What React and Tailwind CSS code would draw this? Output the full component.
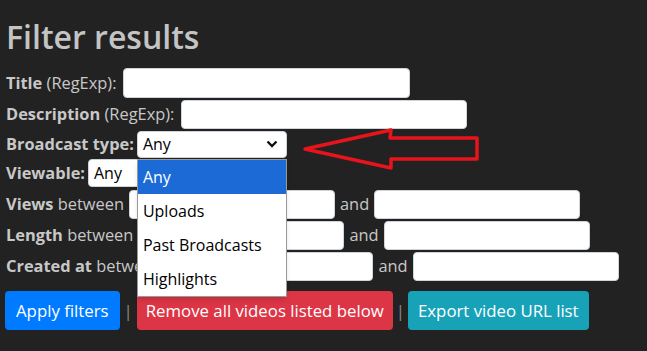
import React from 'react';

const font = { fontFamily: '"Open Sans", "Noto Sans", sans-serif' };

const Field = ({ w, h = 'h-[29px]' }) => (
    <input type="text" className={`${w} ${h} bg-white rounded-[4px] border border-[#ced4da] outline-none`} />
);

const RangeRow = ({ label, h, gap = 'mx-[6px]' }) => (
    <div className={`flex items-center ${h}`}>
        <span className="mr-[5px]"><b>{label}</b> between</span>
        <Field w="w-[206px]" />
        <span className={gap}>and</span>
        <Field w="w-[206px]" />
    </div>
);

export default function App() {
    return (
        <div className="w-[647px] h-[351px] bg-[#222222] text-[#c8c8c8] text-[16.4px] px-[6px] pt-[17px] relative overflow-hidden" style={font}>
            <h2 className="text-[32px] font-semibold leading-[40px] mb-[10px] text-[#c4c4c4]">Filter results</h2>

            <div className="flex items-center h-[32px]">
                <span className="mr-[7px]"><b>Title</b> (RegExp):</span>
                <Field w="w-[287px]" h="h-[30px]" />
            </div>
            <div className="flex items-center h-[31px]">
                <span className="mr-[7px]"><b>Description</b> (RegExp):</span>
                <Field w="w-[286px]" />
            </div>
            <div className="flex items-center h-[28px]">
                <span className="mr-[3px] font-bold">Broadcast type:</span>
                <div className="relative">
                    <div className="w-[150px] h-[27px] bg-white rounded-[4px] border border-[#ced4da] flex items-center justify-between pl-[5px] pr-[8px] text-[16px] text-black">
                        <span>Any</span>
                        <svg width="12" height="8" viewBox="0 0 12 8"><path d="M1.5 1.5 L6 6 L10.5 1.5" fill="none" stroke="#111" strokeWidth="2.4" /></svg>
                    </div>
                    <div className="absolute left-0 top-[28px] w-[150px] bg-white border border-[#9a9a9a] shadow-md z-10 text-[16px] text-black">
                        <div className="h-[34px] flex items-center pl-[5px] bg-[#1b6ad6] text-white">Any</div>
                        <div className="h-[34px] flex items-center pl-[5px]">Uploads</div>
                        <div className="h-[34px] flex items-center pl-[5px]">Past Broadcasts</div>
                        <div className="h-[34px] flex items-center pl-[5px]">Highlights</div>
                    </div>
                </div>
            </div>
            <div className="flex items-center h-[30px]">
                <span className="mr-[3px] font-bold">Viewable:</span>
                <div className="w-[70px] h-[28px] bg-white rounded-[4px] border border-[#ced4da] flex items-center pl-[5px] text-[16px] text-black">Any</div>
            </div>
            <RangeRow label="Views" h="h-[32px]" gap="mx-[5px]" />
            <RangeRow label="Length" h="h-[31px]" gap="mx-[5px]" />
            <RangeRow label="Created at" h="h-[31px]" gap="mx-[5px]" />

            <div className="flex items-center mt-[9px] text-[16.8px] text-white">
                <button className="h-[39px] px-[11px] rounded-[4px] bg-[#007bff] -ml-[1px]">Apply filters</button>
                <span className="text-[#8a8a8a] mx-[4px]">|</span>
                <button className="h-[39px] px-[9px] rounded-[4px] bg-[#dc3545]">Remove all videos listed below</button>
                <span className="text-[#8a8a8a] mx-[3px]">|</span>
                <button className="h-[39px] px-[10px] rounded-[4px] bg-[#17a2b8]">Export video URL list</button>
            </div>

            <svg className="absolute left-0 top-0 pointer-events-none" width="647" height="351">
                <path d="M305 149 L391 130 L390 138 L477 138 L477 159 L391 159 L391 168 Z" fill="none" stroke="#e8141c" strokeWidth="3.5" strokeLinejoin="round" />
            </svg>
        </div>
    );
}
